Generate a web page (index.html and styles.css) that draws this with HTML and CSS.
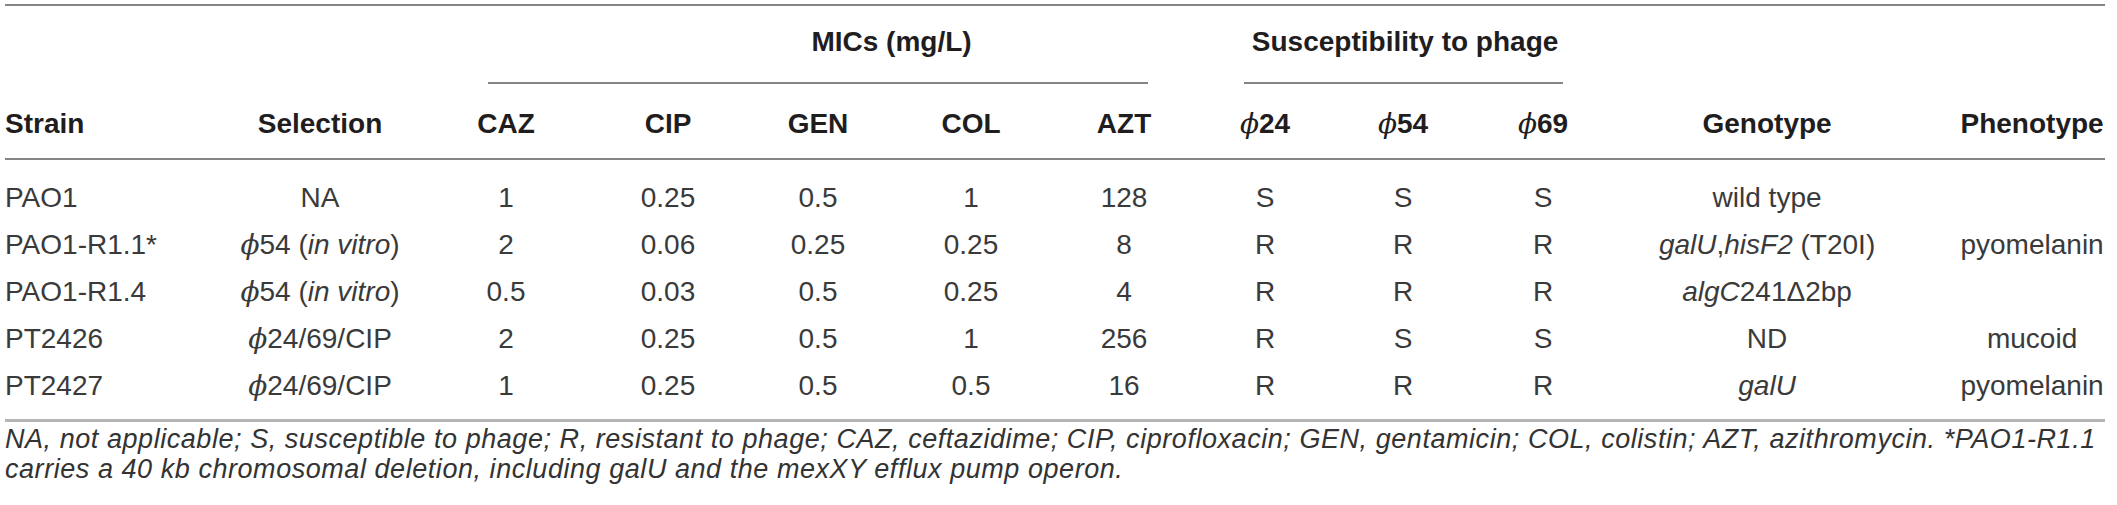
FILE: index.html
```html
<!DOCTYPE html>
<html lang="en">
<head>
<meta charset="utf-8">
<title>Table</title>
<link rel="stylesheet" href="styles.css">
</head>
<body>
<div class="wrap">
<table class="tbl">
  <colgroup>
    <col class="c-strain"><col class="c-sel"><col class="c-caz"><col class="c-cip"><col class="c-gen"><col class="c-col"><col class="c-azt"><col class="c-p24"><col class="c-p54"><col class="c-p69"><col class="c-geno"><col class="c-pheno">
  </colgroup>
  <thead>
    <tr class="group-row">
      <th></th><th></th>
      <th colspan="5" class="group mic"><div class="group-title">MICs (mg/L)</div><div class="group-rule"></div></th>
      <th colspan="3" class="group phage"><div class="group-title">Susceptibility to phage</div><div class="group-rule"></div></th>
      <th></th><th></th>
    </tr>
    <tr class="head-row">
      <th class="left">Strain</th>
      <th>Selection</th>
      <th>CAZ</th>
      <th>CIP</th>
      <th>GEN</th>
      <th>COL</th>
      <th>AZT</th>
      <th><span class="phi">ϕ</span>24</th>
      <th><span class="phi">ϕ</span>54</th>
      <th><span class="phi">ϕ</span>69</th>
      <th>Genotype</th>
      <th class="pheno">Phenotype</th>
    </tr>
  </thead>
  <tbody>
    <tr>
      <td class="left">PAO1</td><td>NA</td><td>1</td><td>0.25</td><td>0.5</td><td>1</td><td>128</td><td>S</td><td>S</td><td>S</td><td>wild type</td><td class="pheno"></td>
    </tr>
    <tr>
      <td class="left">PAO1-R1.1*</td><td><span class="phi">ϕ</span>54 (<i>in vitro</i>)</td><td>2</td><td>0.06</td><td>0.25</td><td>0.25</td><td>8</td><td>R</td><td>R</td><td>R</td><td><i>galU</i>,<i>hisF2</i> (T20I)</td><td class="pheno">pyomelanin</td>
    </tr>
    <tr>
      <td class="left">PAO1-R1.4</td><td><span class="phi">ϕ</span>54 (<i>in vitro</i>)</td><td>0.5</td><td>0.03</td><td>0.5</td><td>0.25</td><td>4</td><td>R</td><td>R</td><td>R</td><td><i>algC</i>241Δ2bp</td><td class="pheno"></td>
    </tr>
    <tr>
      <td class="left">PT2426</td><td><span class="phi">ϕ</span>24/69/CIP</td><td>2</td><td>0.25</td><td>0.5</td><td>1</td><td>256</td><td>R</td><td>S</td><td>S</td><td>ND</td><td class="pheno">mucoid</td>
    </tr>
    <tr>
      <td class="left">PT2427</td><td><span class="phi">ϕ</span>24/69/CIP</td><td>1</td><td>0.25</td><td>0.5</td><td>0.5</td><td>16</td><td>R</td><td>R</td><td>R</td><td><i>galU</i></td><td class="pheno">pyomelanin</td>
    </tr>
  </tbody>
</table>
<p class="note">NA, not applicable; S, susceptible to phage; R, resistant to phage; CAZ, ceftazidime; CIP, ciprofloxacin; GEN, gentamicin; COL, colistin; AZT, azithromycin. *PAO1-R1.1<br>carries a 40 kb chromosomal deletion, including galU and the mexXY efflux pump operon.</p>
</div>
</body>
</html>
```

FILE: styles.css
```css
html, body {
  margin: 0;
  padding: 0;
  background: #ffffff;
}

body {
  font-family: "Liberation Sans", Arial, sans-serif;
  color: #2b2b2b;
}

.wrap {
  width: 2100px;
  margin-left: 5px;
  padding-top: 4px;
}

.tbl {
  width: 2100px;
  table-layout: fixed;
  border-collapse: collapse;
  border-top: 2px solid #858585;
  border-bottom: 3px solid #b5b5b5;
}

.c-strain { width: 210px; }
.c-sel { width: 210px; }
.c-caz { width: 162px; }
.c-cip { width: 162px; }
.c-gen { width: 138px; }
.c-col { width: 168px; }
.c-azt { width: 138px; }
.c-p24 { width: 144px; }
.c-p54 { width: 132px; }
.c-p69 { width: 148px; }
.c-geno { width: 300px; }
.c-pheno { width: 188px; }

.tbl th,
.tbl td {
  padding: 0;
  text-align: center;
  white-space: nowrap;
}

.tbl th {
  font-weight: bold;
  font-size: 28px;
  color: #1f1d1e;
}

.group-row th {
  vertical-align: top;
}

.group {
  text-align: left;
}

.group-title {
  height: 76px;
  line-height: 72px;
  font-size: 28px;
}

.group-rule {
  border-top: 2px solid #858585;
}

.mic .group-title { padding-left: 165px; }
.mic .group-rule { margin-left: 63px; margin-right: 45px; }

.phage .group-title { text-align: center; }
.phage .group-rule { margin-left: 51px; margin-right: 54px; }

.head-row th {
  padding-top: 6px;
  line-height: 68px;
  border-bottom: 2px solid #858585;
}

.tbl .left {
  text-align: left;
}

.tbl .pheno {
  padding-left: 42px;
}

.tbl td {
  font-size: 28px;
  line-height: 47px;
  color: #3a3a3a;
}

.tbl tbody tr:first-child td {
  padding-top: 14px;
}

.tbl tbody tr:last-child td {
  padding-bottom: 10px;
}

.phi {
  font-family: "DejaVu Serif", "Liberation Serif", serif;
  font-style: italic;
  font-weight: normal;
  line-height: 1;
}

.note {
  margin: 2px 0 0 0;
  font-size: 27px;
  line-height: 30px;
  letter-spacing: 0.55px;
  font-style: italic;
  color: #333333;
  white-space: nowrap;
}
```
